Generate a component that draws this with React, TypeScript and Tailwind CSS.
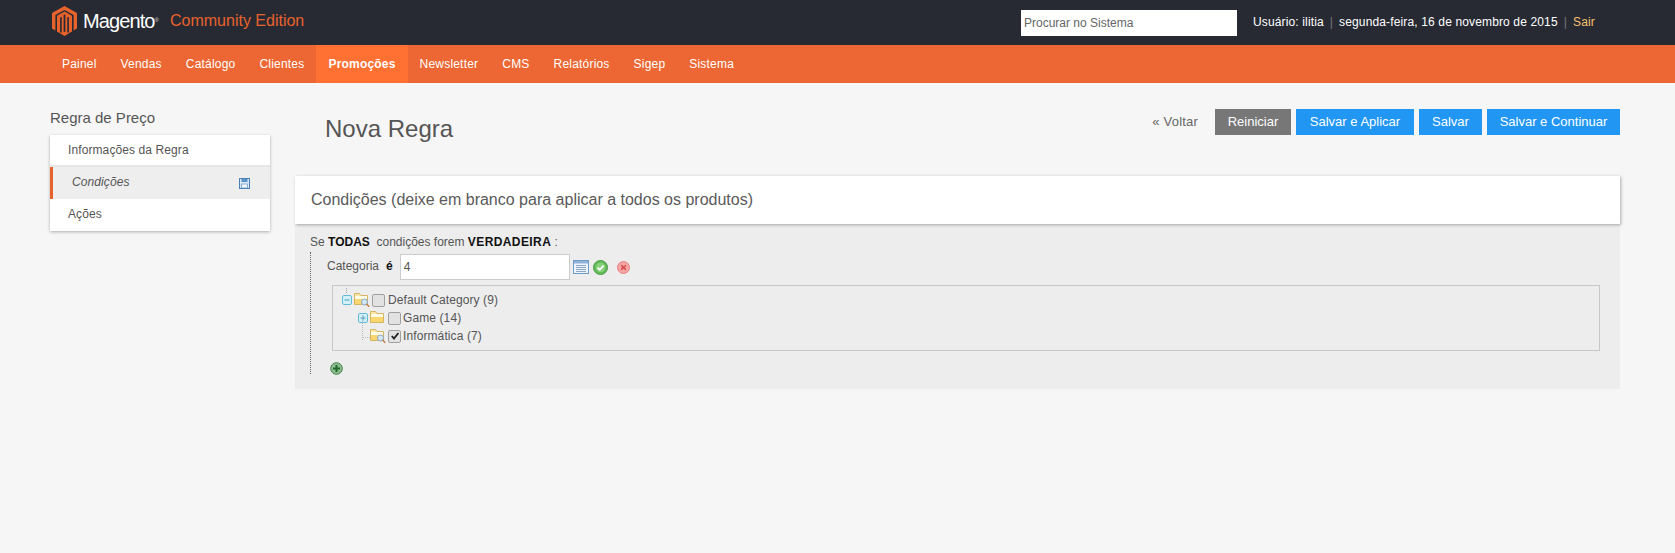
import React from "react";

const Logo = () => (
  <svg width="25" height="30" viewBox="0 0 25 30" className="shrink-0">
    <path d="M12.5 0 L25 7 V22.6 L21.6 24.6 V9 L12.5 3.9 L3.4 9 V24.6 L0 22.6 V7 Z" fill="#e8622c" />
    <path d="M12.5 5.6 L20 9.9 V25.4 L12.5 30 L5 25.4 V9.9 Z" fill="#e8622c" />
    <path d="M8.9 11 V26.5 M16.1 11 V26.5" stroke="#272a33" strokeWidth="1.6" />
    <path d="M12.5 8.6 V25.8" stroke="#272a33" strokeWidth="1.7" />
    <path d="M5 9.9 L9.7 7.2 L8.9 11.5 Z M20 9.9 L15.3 7.2 L16.1 11.5 Z" fill="#e8622c" />
  </svg>
);

const SaveIcon = () => (
  <svg width="11" height="11" viewBox="0 0 11 11">
    <rect x="0.5" y="0.5" width="10" height="10" fill="#dbe9f6" stroke="#4a7fb5" />
    <rect x="2.5" y="1" width="6" height="3" fill="#5d93c6" />
    <rect x="2.5" y="6" width="6" height="4" fill="#f4f8fc" stroke="#5d93c6" strokeWidth="0.7" />
  </svg>
);

const ListIcon = () => (
  <svg width="16" height="14" viewBox="0 0 16 14">
    <rect x="0.5" y="0.5" width="15" height="13" fill="#eef4fb" stroke="#6f9bcb" />
    <rect x="1" y="1" width="14" height="2.5" fill="#8fb3dd" />
    <path d="M3 5.5H13M3 7.5H13M3 9.5H13M3 11.5H13" stroke="#8ba5c2" strokeWidth="1" />
  </svg>
);

const OkIcon = () => (
  <svg width="15" height="15" viewBox="0 0 15 15">
    <circle cx="7.5" cy="7.5" r="7" fill="#62bb58" stroke="#4a9a48" />
    <circle cx="7.5" cy="7.5" r="4.8" fill="#86d07a" />
    <path d="M4.6 7.6 L6.8 9.8 L10.6 5.6" fill="none" stroke="#fff" strokeWidth="1.8" />
  </svg>
);

const CancelIcon = () => (
  <svg width="13" height="13" viewBox="0 0 13 13">
    <circle cx="6.5" cy="6.5" r="6" fill="#f6a5a5" stroke="#e57f7f" />
    <path d="M4.2 4.2 L8.8 8.8 M8.8 4.2 L4.2 8.8" stroke="#d84a4a" strokeWidth="1.6" />
  </svg>
);

const AddIcon = () => (
  <svg width="13" height="13" viewBox="0 0 13 13">
    <circle cx="6.5" cy="6.5" r="5.8" fill="#8dbd8d" stroke="#3f7f4a" />
    <path d="M6.5 3 V10 M3 6.5 H10" stroke="#1f6a2c" strokeWidth="2" />
  </svg>
);

const Toggle = ({ open }: { open?: boolean }) => (
  <svg width="10" height="10" viewBox="0 0 10 10" className="shrink-0">
    <rect x="0.5" y="0.5" width="9" height="9" rx="1.5" fill="#d3f0f8" stroke="#63bcd6" />
    <path d={open ? "M2.5 5H7.5" : "M2.5 5H7.5M5 2.5V7.5"} stroke="#3f9dbb" />
  </svg>
);

const Folder = ({ search }: { search?: boolean }) => (
  <svg width="16" height="16" viewBox="0 0 16 16" className="shrink-0">
    <path d="M0.5 1.5 H5.5 L7 3.5 H13.5 V12.5 H0.5 Z" fill="#fbe6a4" stroke="#d2b463" />
    <rect x="1" y="4" width="12" height="3" fill="#fffbe6" />
    <rect x="1" y="7" width="12" height="5" fill="#fad66f" />
    {search && (
      <>
        <circle cx="10.5" cy="10" r="3" fill="#d4e7f7" stroke="#88a6c4" />
        <path d="M12.6 12.1 L15.2 14.7" stroke="#c8793a" strokeWidth="1.4" />
      </>
    )}
  </svg>
);

const Check = ({ checked }: { checked?: boolean }) => (
  <span className="w-[13px] h-[13px] shrink-0 rounded-[2px] border border-[#a0a0a0] bg-[#e2e2e2] flex items-center justify-center">
    {checked && (
      <svg width="10" height="10" viewBox="0 0 10 10">
        <path d="M1.8 5 L4 7.6 L8.4 2" fill="none" stroke="#222" strokeWidth="1.9" />
      </svg>
    )}
  </span>
);

const nav = ["Painel", "Vendas", "Catálogo", "Clientes", "Promoções", "Newsletter", "CMS", "Relatórios", "Sigep", "Sistema"];

export default function App() {
  return (
    <div className="min-h-[553px] bg-[#f6f6f6] text-[12px] text-[#555] font-['Liberation_Sans',Arial,sans-serif]">
      <header className="h-[45px] bg-[#272a33] flex items-start pl-[52px]">
        <div className="flex items-center h-[40px] pt-[1px]">
          <Logo />
          <span className="ml-[6px] text-[20px] font-light tracking-[-0.9px] text-white">Magento</span>
          <span className="self-center mb-[1px] text-[6px] text-[#ddd]">®</span>
          <span className="ml-[11px] mt-[1px] text-[16px] text-[#e8622c]">Community Edition</span>
        </div>
        <input
          readOnly
          placeholder="Procurar no Sistema"
          className="ml-auto mt-[10px] w-[216px] h-[26px] bg-white px-[3px] text-[12px] text-[#555] placeholder:text-[#666] outline-none"
        />
        <div className="w-[438px] pl-[16px] pt-[15px] text-[12px] tracking-[0.14px] leading-[14px] text-white whitespace-nowrap">
          <span>Usuário: ilitia</span>
          <span className="mx-[6px] text-[#777]">|</span>
          <span>segunda-feira, 16 de novembro de 2015</span>
          <span className="mx-[6px] text-[#777]">|</span>
          <span className="text-[#f5c170]">Sair</span>
        </div>
      </header>

      <nav className="h-[38px] bg-[#ec6733] flex pl-[50px] text-[12px] tracking-[0.2px] text-white">
        {nav.map((n) => (
          <span
            key={n}
            className={
              n === "Promoções"
                ? "px-[12px] leading-[38px] bg-[#ff7033] font-bold"
                : "px-[12px] leading-[38px]"
            }
          >
            {n}
          </span>
        ))}
      </nav>

      <main className="flex pl-[50px] pr-[55px]">
        <aside className="w-[220px] shrink-0 pt-[26px]">
          <h3 className="text-[15px] leading-[18px] text-[#555]">Regra de Preço</h3>
          <ul className="mt-[8px] bg-white tracking-[0.1px] shadow-[0_1px_3px_rgba(0,0,0,0.3)]">
            <li className="h-[32px] leading-[30px] pl-[18px] border-b-2 border-[#e6e6e6]">Informações da Regra</li>
            <li className="h-[32px] pl-[19px] italic bg-[#eeeeee] border-l-[3px] border-[#e8622c] flex items-center justify-between pr-[20px]">
              <span className="mt-[-2px]">Condições</span>
              <SaveIcon />
            </li>
            <li className="h-[32px] leading-[30px] pl-[18px]">Ações</li>
          </ul>
        </aside>

        <section className="flex-1 ml-[25px]">
          <div className="flex items-start justify-between h-[93px] pt-[26px]">
            <h1 className="ml-[30px] mt-[2px] text-[24px] leading-[36px] text-[#555]">Nova Regra</h1>
            <div className="flex items-center gap-[5px] text-[13px] text-white">
              <span className="mr-[12px] tracking-[0.2px] text-[#666]">« Voltar</span>
              <span className="h-[26px] leading-[26px] w-[76px] text-center bg-[#777777]">Reiniciar</span>
              <span className="h-[26px] leading-[26px] w-[118px] text-center bg-[#2196f3]">Salvar e Aplicar</span>
              <span className="h-[26px] leading-[26px] w-[63px] text-center bg-[#2196f3]">Salvar</span>
              <span className="h-[26px] leading-[26px] w-[133px] text-center bg-[#2196f3]">Salvar e Continuar</span>
            </div>
          </div>

          <div className="h-[48px] bg-white pl-[16px] flex items-center text-[16px] text-[#5a5a5a] shadow-[1px_1px_3px_rgba(0,0,0,0.3)] relative">
            Condições (deixe em branco para aplicar a todos os produtos)
          </div>

          <div className="h-[165px] bg-[#ededed] pl-[15px] pr-[20px] pt-[11px]">
            <div className="leading-[14px] whitespace-pre">
              Se <b className="text-[#111]">TODAS</b>  condições forem <b className="text-[#111] tracking-[0.4px]">VERDADEIRA</b> :
            </div>
            <div className="mt-[3px] h-[122px] pt-[2px] border-l border-dotted border-[#666] pl-[16px]">
              <div className="flex items-center h-[26px]">
                <span className="pb-[2px]">Categoria</span>
                <b className="ml-[7px] pb-[2px] text-[#111]">é</b>
                <span className="ml-[7px] w-[170px] h-[26px] leading-[24px] bg-white border border-[#ccc] px-[3px]">4</span>
                <span className="ml-[3px] flex"><ListIcon /></span>
                <span className="ml-[4px] flex"><OkIcon /></span>
                <span className="ml-[9px] flex"><CancelIcon /></span>
              </div>
              <div className="relative ml-[5px] mt-[5px] h-[66px] border border-[#c8c8c8] pt-[5px] text-[12px] tracking-[0.1px] leading-[18px]">
                <span className="absolute left-[13px] top-[2px] h-[5px] border-l border-dotted border-[#aaa]" />
                <span className="absolute left-[29px] top-[29px] h-[25px] border-l border-dotted border-[#bbb]" />
                <span className="absolute left-[29px] top-[51px] w-[8px] border-t border-dotted border-[#bbb]" />
                <div className="flex items-center gap-[2px] h-[18px] pl-[9px]">
                  <Toggle open />
                  <Folder search />
                  <Check />
                  <span className="ml-[1px]">Default Category (9)</span>
                </div>
                <div className="flex items-center gap-[2px] h-[18px] pl-[25px]">
                  <Toggle />
                  <Folder />
                  <Check />
                  <span>Game (14)</span>
                </div>
                <div className="flex items-center gap-[2px] h-[18px] pl-[37px]">
                  <Folder search />
                  <Check checked />
                  <span>Informática (7)</span>
                </div>
              </div>
              <div className="mt-[11px] ml-[3px] flex"><AddIcon /></div>
            </div>
          </div>
        </section>
      </main>
    </div>
  );
}
